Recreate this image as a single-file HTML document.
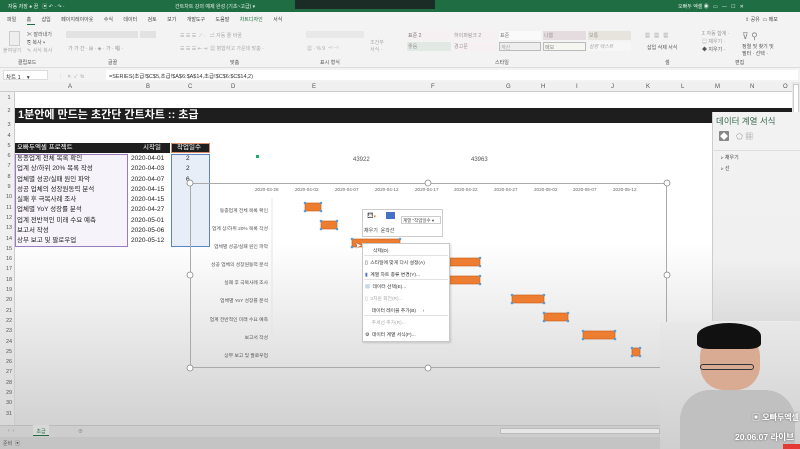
<!DOCTYPE html>
<html><head><meta charset="utf-8"><style>
*{margin:0;padding:0;box-sizing:border-box}
body{width:800px;height:449px;overflow:hidden;position:relative;font-family:"Liberation Sans","Noto Sans CJK KR",sans-serif;background:#fff;color:#333}
.a{position:absolute;white-space:nowrap}
.t{font-size:6px;color:#555}
.s5{font-size:5px;color:#666}
</style></head><body>
<div class="a" style="left:0;top:0;width:800px;height:12px;background:#1f6e43"></div>
<div class="a" style="left:295px;top:0;width:140px;height:9px;background:#1b2b25"></div>
<div class="a s5" style="left:8px;top:3px;color:#e8f0ea">자동 저장 ● 끔 &nbsp; ▣ ↶ · ↷ ·</div>
<div class="a s5" style="left:175px;top:3px;color:#e8f0ea">간트차트 강의 예제 완성 (기초~고급) ▾</div>
<div class="a s5" style="left:678px;top:3px;color:#e8f0ea">오빠두 엑셀 ◉ &nbsp; ▭ &nbsp; — &nbsp; ☐ &nbsp; ✕</div>
<div class="a" style="left:0;top:12px;width:800px;height:14px;background:#f3f3f3"></div>
<div class="a s5" style="left:7px;top:16px;color:#444;word-spacing:9px">파일 홈 삽입 페이지&#8203;레이아웃 수식 데이터 검토 보기 개발&#8203;도구 도움말 <span style="color:#1f6e43">차트&#8203;디자인</span> 서식</div>
<div class="a" style="left:27px;top:24px;width:8px;height:1px;background:#1f6e43"></div>
<div class="a s5" style="left:745px;top:16px;color:#444">⇪ 공유 &nbsp;▭ 메모</div>
<div class="a" style="left:0;top:26px;width:800px;height:42px;background:#f3f3f3;border-bottom:1px solid #ddd"></div>
<div class="a" style="left:9px;top:31px;width:11px;height:15px;border:1px solid #ccc;background:#eee"></div>
<div class="a s5" style="left:3px;top:47px;color:#aaa">붙여넣기</div>
<div class="a s5" style="left:27px;top:31px;line-height:8px;color:#555">✂ 잘라내기<br>⎘ 복사 ▾<br><span style="color:#aaa">✎ 서식 복사</span></div>
<div class="a" style="left:66px;top:31px;width:72px;height:7px;background:#e2e2e2"></div>
<div class="a" style="left:140px;top:31px;width:16px;height:7px;background:#e2e2e2"></div>
<div class="a s5" style="left:68px;top:45px;color:#999">가 가 간 · ⊞ · ◈ · 가 · 唱 ·</div>
<div class="a s5" style="left:180px;top:32px;color:#aaa">☰ ☰ ☰ &nbsp;⟋ · &nbsp; ⇌ 자동 줄 바꿈</div>
<div class="a s5" style="left:180px;top:45px;color:#aaa">☰ ☰ ☰ ⇤ ⇥ &nbsp;▦ 병합하고 가운데 맞춤 ·</div>
<div class="a" style="left:306px;top:31px;width:58px;height:7px;background:#e8e8e8"></div>
<div class="a s5" style="left:307px;top:45px;color:#aaa">▦ · % 9 &nbsp;⁺⁰ ⁻⁰</div>
<div class="a s5" style="left:370px;top:40px;color:#aaa;line-height:7px">조건부<br>서식 ·</div>
<div class="a" style="left:405px;top:30px;width:230px;height:25px">
<div class="a" style="left:2px;top:1px;width:44px;height:9px;background:#f6f0f2;font-size:5px;color:#777;padding:1px">표준 2</div>
<div class="a" style="left:48px;top:1px;width:44px;height:9px;background:#f6f0f2;font-size:5px;color:#999;padding:1px">하이퍼링크 2</div>
<div class="a" style="left:94px;top:1px;width:42px;height:9px;background:#fafafa;font-size:5px;color:#777;padding:1px">표준</div>
<div class="a" style="left:138px;top:1px;width:43px;height:9px;background:#e4dcdf;font-size:5px;color:#999;padding:1px">나쁨</div>
<div class="a" style="left:183px;top:1px;width:43px;height:9px;background:#e6e4dc;font-size:5px;color:#999;padding:1px">보통</div>
<div class="a" style="left:2px;top:12px;width:44px;height:9px;background:#e2e8e3;font-size:5px;color:#999;padding:1px">좋음</div>
<div class="a" style="left:48px;top:12px;width:44px;height:9px;background:#f6f0f2;font-size:5px;color:#999;padding:1px">경고문</div>
<div class="a" style="left:94px;top:12px;width:42px;height:9px;background:#eeeeee;border:1px solid #bbb;font-size:5px;color:#aaa;padding:1px">계산</div>
<div class="a" style="left:138px;top:12px;width:43px;height:9px;background:#f6f6f0;border:1px solid #bbb;font-size:5px;color:#888;padding:1px">메모</div>
<div class="a" style="left:183px;top:12px;width:43px;height:9px;background:#f6f6f6;font-size:5px;color:#aaa;padding:1px;font-style:italic">설명 텍스트</div>
</div>
<div class="a s5" style="left:645px;top:32px;color:#888">▦ &nbsp; ▦ &nbsp; ▦</div>
<div class="a s5" style="left:647px;top:44px;color:#555">삽입 삭제 서식</div>
<div class="a s5" style="left:702px;top:30px;color:#999;line-height:8px">Σ 자동 합계 ·<br>▤ 채우기 ·<br><span style="color:#555">◆ 지우기 ·</span></div>
<div class="a s5" style="left:742px;top:31px;color:#888;font-size:9px">⊽ ⚲</div>
<div class="a s5" style="left:742px;top:44px;color:#555;line-height:7px">정렬 및 찾기 및<br>필터 · 선택 ·</div>
<div class="a s5" style="left:18px;top:59px;color:#555">클립보드</div>
<div class="a s5" style="left:108px;top:59px;color:#555">글꼴</div>
<div class="a s5" style="left:230px;top:59px;color:#555">맞춤</div>
<div class="a s5" style="left:320px;top:59px;color:#555">표시 형식</div>
<div class="a s5" style="left:495px;top:59px;color:#555">스타일</div>
<div class="a s5" style="left:665px;top:59px;color:#555">셀</div>
<div class="a s5" style="left:735px;top:59px;color:#555">편집</div>
<div class="a" style="left:0;top:68px;width:800px;height:14px;background:#f3f3f3"></div>
<div class="a" style="left:3px;top:70px;width:45px;height:10px;background:#fff;border:1px solid #ddd;font-size:5.5px;padding:2px 2px;color:#333">차트 1 &nbsp;&nbsp;&nbsp;▾</div>
<div class="a s5" style="left:58px;top:73px;color:#aaa">⋮ &nbsp; ✕ &nbsp;✓ &nbsp;fx</div>
<div class="a" style="left:106px;top:70px;width:692px;height:10px;background:#fff;font-size:5.5px;padding:2px 3px;color:#333">=SERIES(초급!$C$5,초급!$A$6:$A$14,초급!$C$6:$C$14,2)</div>
<div class="a" style="left:0;top:82px;width:800px;height:10px;background:#f0f0f0;border-bottom:1px solid #ccc"></div>
<div class="a t" style="left:68px;top:84px">A</div><div class="a t" style="left:146px;top:84px">B</div><div class="a t" style="left:188px;top:84px">C</div><div class="a t" style="left:231px;top:84px">D</div><div class="a t" style="left:312px;top:84px">E</div><div class="a t" style="left:431px;top:84px">F</div><div class="a t" style="left:506px;top:84px">G</div><div class="a t" style="left:541px;top:84px">H</div><div class="a t" style="left:576px;top:84px">I</div><div class="a t" style="left:611px;top:84px">J</div><div class="a t" style="left:646px;top:84px">K</div><div class="a t" style="left:681px;top:84px">L</div><div class="a t" style="left:715px;top:84px">M</div><div class="a t" style="left:750px;top:84px">N</div><div class="a t" style="left:783px;top:84px">O</div>
<div class="a" style="left:15px;top:92px;width:777px;height:333px;background:linear-gradient(#fff 0%,#fff 45%,#e6e6e6 75%,#d2d2d2 100%)"></div>
<div class="a" style="left:0;top:92px;width:15px;height:333px;background:linear-gradient(#f0f0f0,#f0f0f0 50%,#d8d8d8);border-right:1px solid #ccc"></div>
<div class="a" style="left:792px;top:82px;width:8px;height:343px;background:#e8e8e8"></div>
<div class="a" style="left:793px;top:84px;width:6px;height:30px;background:#fff;border:1px solid #ccc"></div>
<div class="a t" style="left:4px;top:93px;line-height:10.3px;font-size:5.5px;width:10px;text-align:center">1<br><span style="line-height:17px">2</span><br>3<br>4<br>5<br>6<br>7<br>8<br>9<br>10<br>11<br>12<br>13<br>14<br>15<br>16<br>17<br>18<br>19<br>20<br>21<br>22<br>23<br>24<br>25<br>26<br>27<br>28<br>29<br>30<br>31</div>
<div class="a" style="left:15px;top:108px;width:777px;height:15px;background:#1e1e1e"></div>
<div class="a" style="left:18px;top:108px;font-size:11px;font-weight:bold;color:#fff;line-height:15px">1분안에 만드는 초간단 간트차트 :: 초급</div>
<div class="a" style="left:15px;top:143px;width:155px;height:10px;background:#1e1e1e"></div>
<div class="a" style="left:17px;top:143px;font-size:6.5px;color:#fff;line-height:10px">오빠두엑셀 프로젝트</div>
<div class="a" style="left:143px;top:143px;font-size:6.5px;color:#fff;line-height:10px">시작일</div>
<div class="a" style="left:171px;top:143px;width:39px;height:10px;background:#1e1e1e;border:1px solid #d98a6a"></div>
<div class="a" style="left:177px;top:143px;font-size:6.5px;color:#fff;line-height:10px">작업일수</div>
<div class="a" style="left:15px;top:154px;width:113px;height:93px;background:#f7f3fa;border:1px solid #9c7bb8"></div>
<div class="a" style="left:171px;top:154px;width:39px;height:93px;background:#e8eef8;border:1px solid #5b85c4"></div>
<div class="a" style="left:17px;top:154px;font-size:6.5px;line-height:10.3px;color:#222">동종업계 전체 목록 확인<br>업계 상/하위 20% 목록 작성<br>업체별 성공/실패 원인 파악<br>성공 업체의 성장원동력 분석<br>실패 후 극복사례 조사<br>업체별 YoY 성장률 분석<br>업계 전반적인 미래 수요 예측<br>보고서 작성<br>상부 보고 및 팔로우업</div>
<div class="a" style="left:131px;top:154px;font-size:6.5px;line-height:10.3px;color:#222">2020-04-01<br>2020-04-03<br>2020-04-07<br>2020-04-15<br>2020-04-15<br>2020-04-27<br>2020-05-01<br>2020-05-06<br>2020-05-12</div>
<div class="a" style="left:186px;top:154px;font-size:6.5px;line-height:10.3px;color:#222">2<br>2<br>6</div>
<div class="a t" style="left:353px;top:157px">43922</div>
<div class="a t" style="left:471px;top:157px">43963</div>
<div class="a" style="left:256px;top:155px;width:3px;height:3px;background:#2a6"></div>
<div class="a" style="left:190px;top:183px;width:477px;height:185px;border:1px solid #aaa"></div>
<svg class="a" style="left:0;top:0" width="800" height="449">
<g fill="#fff" stroke="#888" stroke-width=".8">
<circle cx="190" cy="183" r="3"/><circle cx="428" cy="183" r="3"/><circle cx="667" cy="183" r="3"/><circle cx="190" cy="275" r="3"/><circle cx="667" cy="275" r="3"/><circle cx="190" cy="368" r="3"/><circle cx="428" cy="368" r="3"/><circle cx="667" cy="368" r="3"/></g>
<line x1="272" y1="198" x2="272" y2="362" stroke="#e4e4e4"/>
<g fill="#ed7d31" stroke="#c55a11" stroke-width=".6">
<rect x="305" y="203" width="16" height="8"/><rect x="321" y="221" width="16" height="8"/><rect x="352" y="239" width="48" height="8"/><rect x="409" y="258" width="71" height="8"/><rect x="409" y="276" width="71" height="8"/><rect x="512" y="295" width="32" height="8"/><rect x="544" y="313" width="24" height="8"/><rect x="583" y="331" width="32" height="8"/><rect x="632" y="348" width="8" height="8"/></g>
<g fill="#5b9bd5">
<circle cx="305" cy="203" r="1.3"/><circle cx="321" cy="203" r="1.3"/><circle cx="305" cy="211" r="1.3"/><circle cx="321" cy="211" r="1.3"/>
<circle cx="321" cy="221" r="1.3"/><circle cx="337" cy="221" r="1.3"/><circle cx="321" cy="229" r="1.3"/><circle cx="337" cy="229" r="1.3"/>
<circle cx="352" cy="239" r="1.3"/><circle cx="400" cy="239" r="1.3"/><circle cx="352" cy="247" r="1.3"/>
<circle cx="480" cy="258" r="1.3"/><circle cx="480" cy="266" r="1.3"/><circle cx="480" cy="276" r="1.3"/><circle cx="480" cy="284" r="1.3"/>
<circle cx="512" cy="295" r="1.3"/><circle cx="544" cy="295" r="1.3"/><circle cx="512" cy="303" r="1.3"/><circle cx="544" cy="303" r="1.3"/>
<circle cx="544" cy="313" r="1.3"/><circle cx="568" cy="313" r="1.3"/><circle cx="544" cy="321" r="1.3"/><circle cx="568" cy="321" r="1.3"/>
<circle cx="583" cy="331" r="1.3"/><circle cx="615" cy="331" r="1.3"/><circle cx="583" cy="339" r="1.3"/><circle cx="615" cy="339" r="1.3"/>
<circle cx="632" cy="348" r="1.3"/><circle cx="640" cy="348" r="1.3"/><circle cx="632" cy="356" r="1.3"/><circle cx="640" cy="356" r="1.3"/></g>
</svg>
<div class="a" style="left:255px;top:187px;font-size:4.6px;color:#666">
<span class="a" style="left:0">2020-03-28</span><span class="a" style="left:40px">2020-04-02</span><span class="a" style="left:80px">2020-04-07</span><span class="a" style="left:120px">2020-04-12</span><span class="a" style="left:160px">2020-04-17</span><span class="a" style="left:199px">2020-04-22</span><span class="a" style="left:239px">2020-04-27</span><span class="a" style="left:279px">2020-05-02</span><span class="a" style="left:318px">2020-05-07</span><span class="a" style="left:358px">2020-05-12</span></div>
<div class="a" style="left:190px;top:203px;width:78px;text-align:right;font-size:4.8px;line-height:18.1px;color:#555">동종업계 전체 목록 확인<br>업계 상/하위 20% 목록 작성<br>업체별 성공/실패 원인 파악<br>성공 업체의 성장원동력 분석<br>실패 후 극복사례 조사<br>업체별 YoY 성장률 분석<br>업계 전반적인 미래 수요 예측<br>보고서 작성<br>상부 보고 및 팔로우업</div>
<div class="a" style="left:362px;top:209px;width:81px;height:28px;background:#fff;border:1px solid #ccc"></div>
<div class="a" style="left:367px;top:211px;font-size:8px;color:#555">⛾<span style="color:#ed7d31;font-size:5px">▾</span></div>
<div class="a" style="left:386px;top:212px;width:9px;height:7px;background:#4472c4"></div>
<div class="a s5" style="left:364px;top:227px;color:#444">채우기 &nbsp;윤곽선</div>
<div class="a" style="left:401px;top:216px;width:40px;height:8px;border:1px solid #ccc;font-size:4.5px;padding:1px;color:#444">계열 "작업일수 ▾</div>
<div class="a" style="left:362px;top:243px;width:88px;height:99px;background:#fff;border:1px solid #c8c8c8;box-shadow:1px 1px 2px rgba(0,0,0,.15)"></div>
<div class="a" style="left:365px;top:246px;font-size:4.8px;line-height:12px;color:#333">
&nbsp;&nbsp;&nbsp;&nbsp;&nbsp;&nbsp;삭제(D)<br>▯ &nbsp;스타일에 맞게 다시 설정(A)<br><span style="color:#4472c4">▮</span> &nbsp;계열 차트 종류 변경(Y)...<br><span style="color:#4472c4">▦</span> &nbsp;데이터 선택(E)...<br><span style="color:#aaa">▯ &nbsp;3차원 회전(R)...</span><br>&nbsp;&nbsp;&nbsp;&nbsp;&nbsp;데이터 레이블 추가(B) &nbsp;&nbsp;&nbsp;&nbsp;›<br><span style="color:#aaa">&nbsp;&nbsp;&nbsp;&nbsp;&nbsp;추세선 추가(R)...</span><br>⚙ &nbsp;데이터 계열 서식(F)...</div>
<div class="a" style="left:364px;top:255px;width:84px;height:1px;background:#e2e2e2"></div>
<div class="a" style="left:364px;top:279px;width:84px;height:1px;background:#e2e2e2"></div>
<div class="a" style="left:364px;top:315px;width:84px;height:1px;background:#e2e2e2"></div>
<div class="a" style="left:355px;top:241px;font-size:8px;color:#fff;text-shadow:0 0 1px #000">➤</div>
<div class="a" style="left:712px;top:112px;width:88px;height:209px;background:linear-gradient(#f2f2f2,#f0f0f0 70%,#dcdcdc);border-left:1px solid #ccc"></div>
<div class="a" style="left:716px;top:115px;font-size:8.5px;color:#3c6b52">데이터 계열 서식</div>
<div class="a" style="left:719px;top:131px;width:10px;height:10px;background:#888;border-radius:1px"></div>
<div class="a" style="left:720px;top:131px;font-size:8px;color:#fff">◆</div>
<div class="a" style="left:736px;top:131px;font-size:8px;color:#999">⬠ ▦</div>
<div class="a" style="left:714px;top:150px;width:86px;height:1px;background:#ddd"></div>
<div class="a s5" style="left:721px;top:153px;color:#444;line-height:11px">▹ 채우기<br>▹ 선</div>
<div class="a" style="left:660px;top:322px;width:140px;height:127px;background:linear-gradient(#e8e8e8,#cfcfcf)"></div>
<div class="a" style="left:700px;top:330px;width:60px;height:60px;border-radius:45% 45% 40% 40%;background:#d8ab92"></div>
<div class="a" style="left:697px;top:323px;width:64px;height:26px;border-radius:50% 50% 20% 20%;background:#111"></div>
<div class="a" style="left:700px;top:364px;width:54px;height:6px;border:1px solid #333;border-radius:3px"></div>
<div class="a" style="left:680px;top:390px;width:115px;height:59px;border-radius:30px 30px 0 0;background:#c0c0c0"></div>
<div class="a" style="left:752px;top:412px;font-size:8px;color:#fff;font-weight:bold;text-shadow:0 0 2px #555">▣ 오빠두엑셀</div>
<div class="a" style="left:735px;top:431px;font-size:8.5px;color:#fff;font-weight:bold;text-shadow:0 0 2px #555">20.06.07 라이브</div>
<div class="a" style="left:783px;top:444px;width:17px;height:5px;background:#e53935"></div>
<div class="a" style="left:0;top:425px;width:660px;height:12px;background:#cdcdcd;border-top:1px solid #bbb"></div>
<div class="a s5" style="left:8px;top:428px;color:#888">‹ &nbsp;›</div>
<div class="a" style="left:33px;top:425px;width:16px;height:11px;background:#d8d8d8;border-bottom:1px solid #1f6e43;font-size:5px;color:#1f6e43;text-align:center;padding-top:3px">초급</div>
<div class="a s5" style="left:78px;top:428px;color:#888">⊕</div>
<div class="a" style="left:500px;top:428px;width:160px;height:6px;background:#e6e6e6;border:1px solid #bbb"></div>
<div class="a" style="left:0;top:437px;width:660px;height:12px;background:#c4c4c4"></div>
<div class="a s5" style="left:3px;top:440px;color:#555">준비 &nbsp;▣</div>
</body></html>
